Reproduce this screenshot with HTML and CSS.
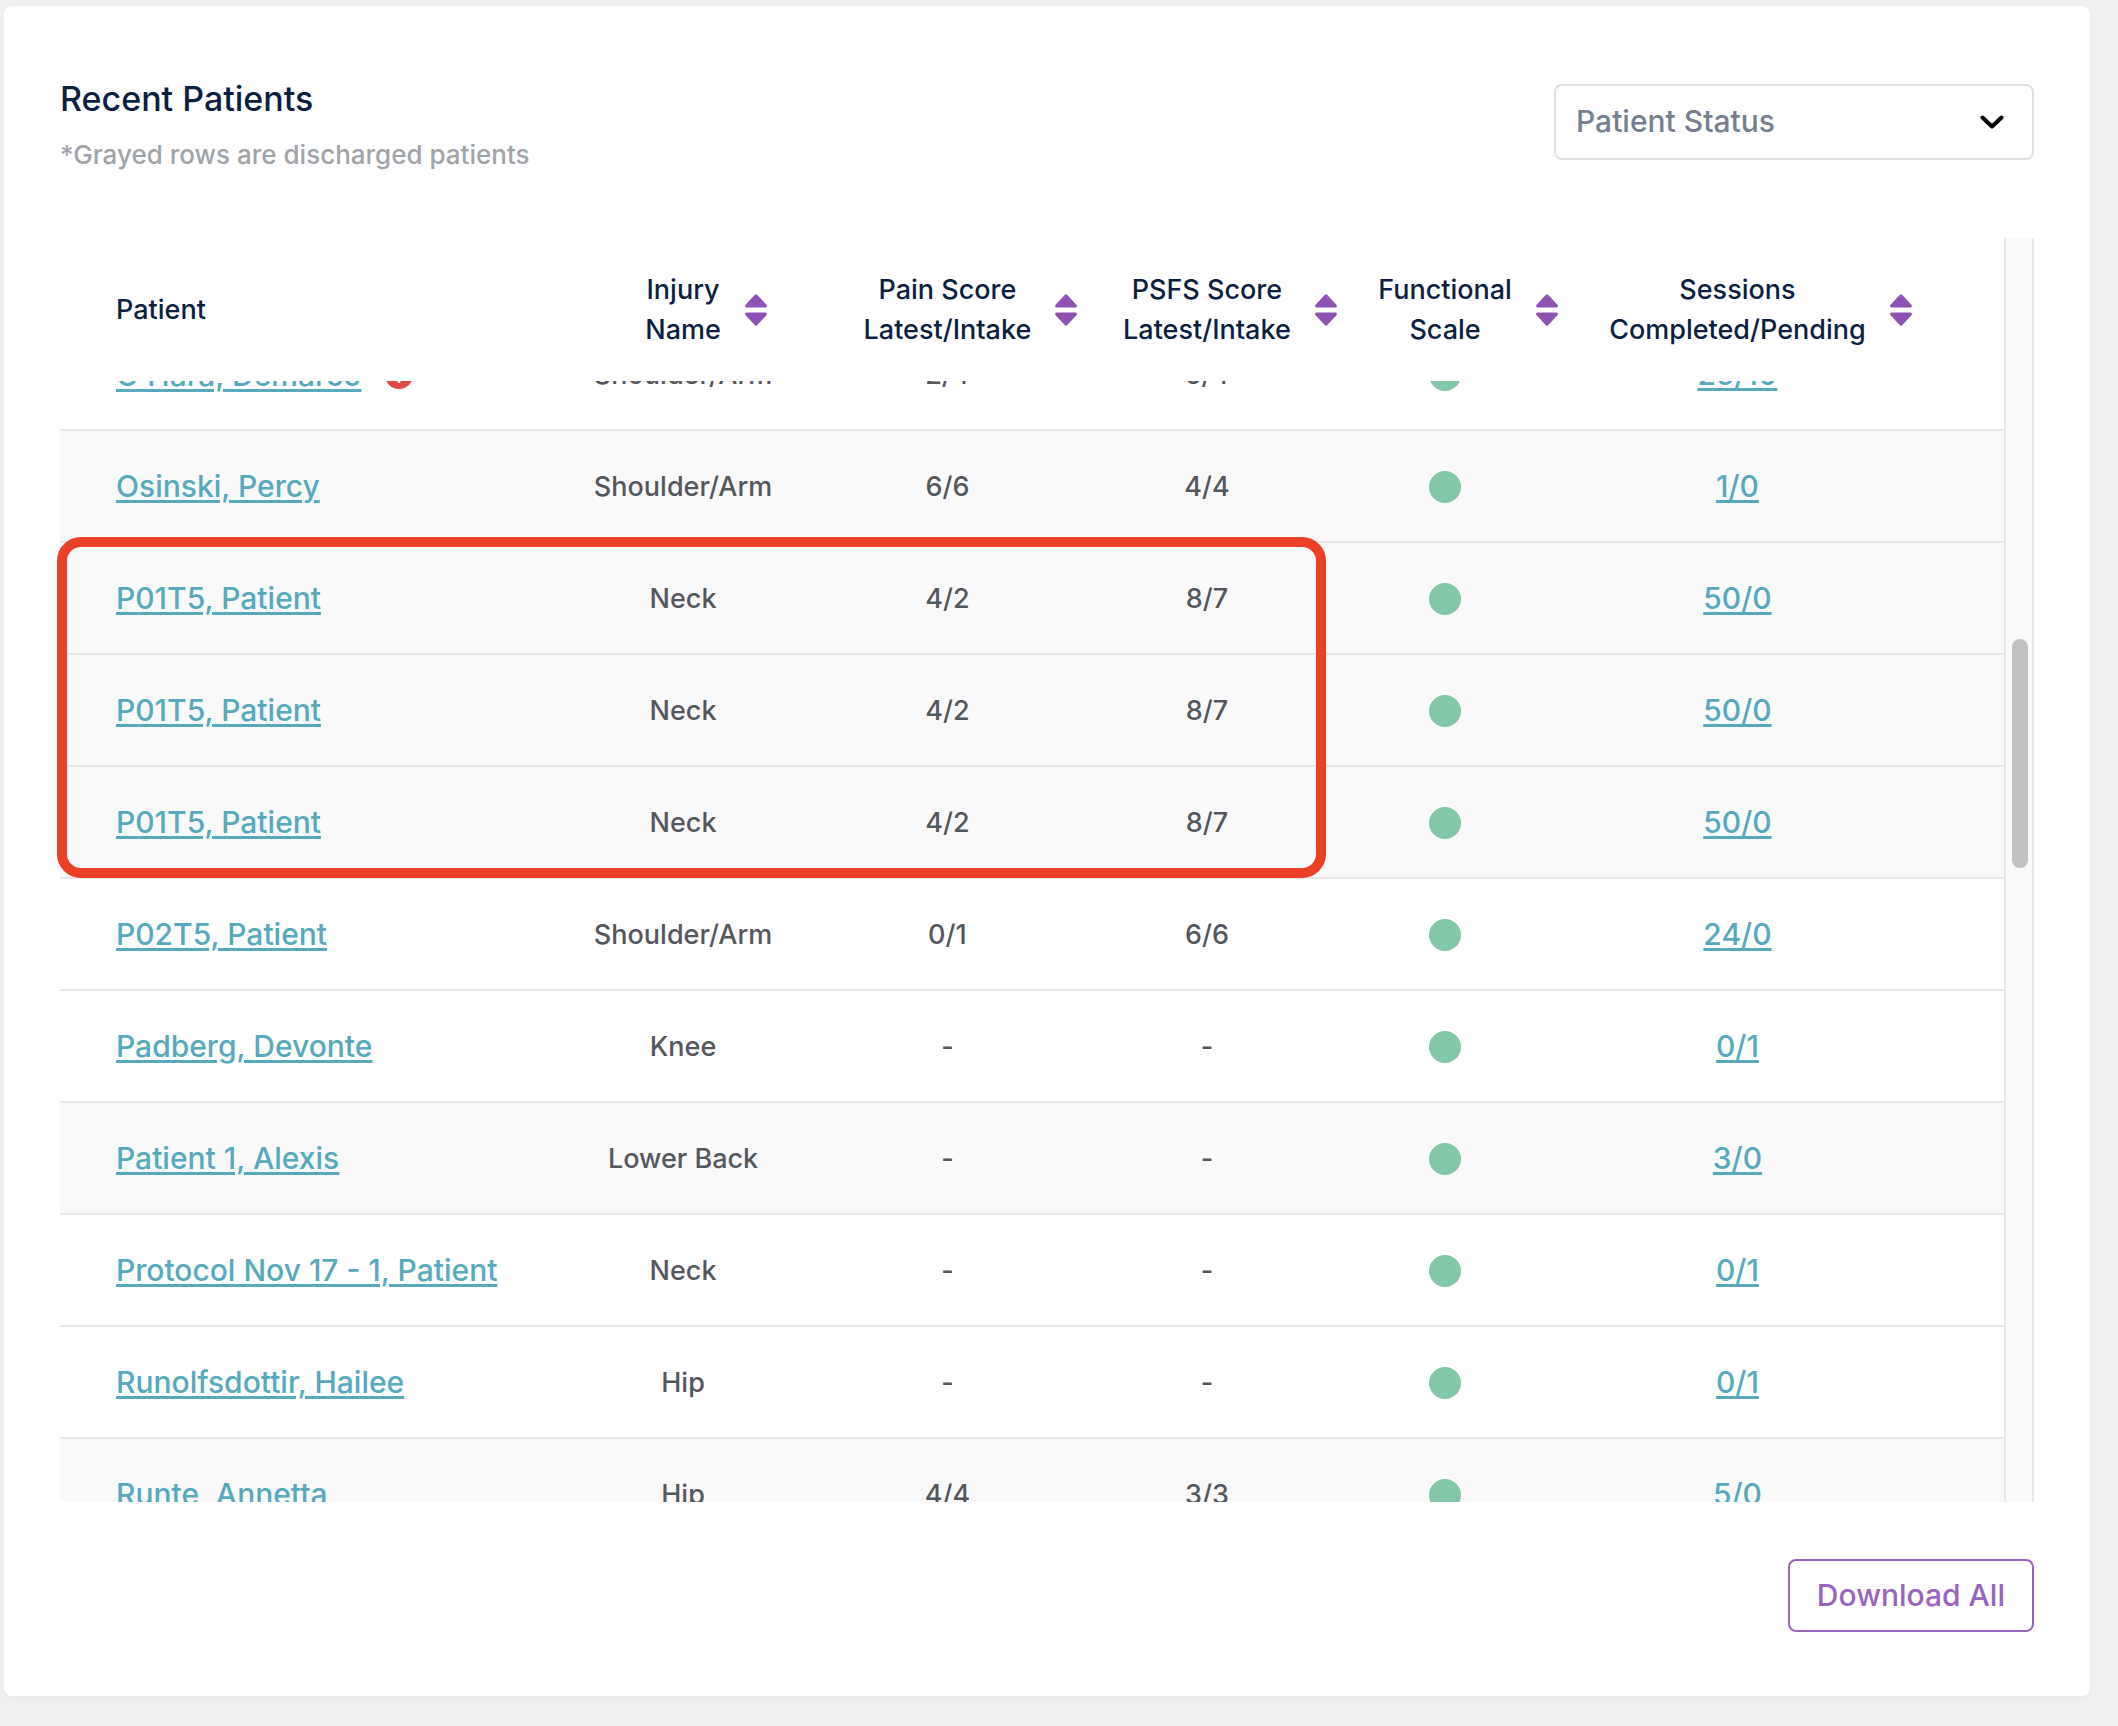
FILE: index.html
```html
<!DOCTYPE html>
<html lang="en">
<head>
<meta charset="utf-8">
<meta name="viewport" content="width=device-width, initial-scale=1">
<title>Recent Patients</title>
<link rel="stylesheet" href="styles.css">
</head>
<body>
<svg class="sprite" aria-hidden="true">
  <symbol id="sort" viewBox="0 0 22 32">
    <path d="M9.9.8 .6 10.7C-.5 12 .2 13.5 1.8 13.5H20.2C21.8 13.5 22.5 12 21.4 10.7L12.1.8Q11 -.2 9.9.8Z"/>
    <path d="M9.9 31.2 .6 21.3C-.5 20 .2 18.5 1.8 18.5H20.2C21.8 18.5 22.5 20 21.4 21.3L12.1 31.2Q11 32.2 9.9 31.2Z"/>
  </symbol>
</svg>
<main class="card">
  <header class="card-head">
    <div>
      <h1 class="title">Recent Patients</h1>
      <p class="note">*Grayed rows are discharged patients</p>
    </div>
    <div class="status">
      <select class="status-select" aria-label="Patient Status">
        <option>Patient Status</option>
        <option>Active</option>
        <option>Discharged</option>
      </select>
      <svg class="chevron" viewBox="0 0 24 14" aria-hidden="true"><path d="M2.5 2.5 12 11.5 21.5 2.5"/></svg>
    </div>
  </header>

  <section class="panel">
    <div class="scroller" id="scroller">
      <table class="patients">
        <colgroup>
          <col class="col-patient"><col class="col-injury"><col class="col-pain"><col class="col-psfs"><col class="col-scale"><col>
        </colgroup>
        <thead>
          <tr>
            <th scope="col" class="name">Patient</th>
            <th scope="col"><button type="button" class="sorter"><span>Injury<br>Name</span><svg class="sort-icon" aria-hidden="true"><use href="#sort"/></svg></button></th>
            <th scope="col"><button type="button" class="sorter"><span>Pain Score<br>Latest/Intake</span><svg class="sort-icon" aria-hidden="true"><use href="#sort"/></svg></button></th>
            <th scope="col"><button type="button" class="sorter"><span>PSFS Score<br>Latest/Intake</span><svg class="sort-icon" aria-hidden="true"><use href="#sort"/></svg></button></th>
            <th scope="col"><button type="button" class="sorter"><span>Functional<br>Scale</span><svg class="sort-icon" aria-hidden="true"><use href="#sort"/></svg></button></th>
            <th scope="col" class="sessions"><button type="button" class="sorter"><span>Sessions<br>Completed/Pending</span><svg class="sort-icon" aria-hidden="true"><use href="#sort"/></svg></button></th>
          </tr>
        </thead>
        <tbody>
          <tr><td class="name"><div class="flagged"><a href="#">O’Hara, Demarco</a><svg class="alert" viewBox="0 0 28 28" role="img" aria-label="Alert"><circle cx="14" cy="14" r="14"/><path d="M14 6.5V15"/><path d="M14 20.5V20.6"/></svg></div></td><td>Shoulder/Arm</td><td>2/4</td><td>6/4</td><td><span class="dot"></span></td><td class="sessions"><a href="#">25/10</a></td></tr>
          <tr class="discharged"><td class="name"><a href="#">Osinski, Percy</a></td><td>Shoulder/Arm</td><td>6/6</td><td>4/4</td><td><span class="dot"></span></td><td class="sessions"><a href="#">1/0</a></td></tr>
          <tr class="discharged"><td class="name"><a href="#">P01T5, Patient</a></td><td>Neck</td><td>4/2</td><td>8/7</td><td><span class="dot"></span></td><td class="sessions"><a href="#">50/0</a></td></tr>
          <tr class="discharged"><td class="name"><a href="#">P01T5, Patient</a></td><td>Neck</td><td>4/2</td><td>8/7</td><td><span class="dot"></span></td><td class="sessions"><a href="#">50/0</a></td></tr>
          <tr class="discharged"><td class="name"><a href="#">P01T5, Patient</a></td><td>Neck</td><td>4/2</td><td>8/7</td><td><span class="dot"></span></td><td class="sessions"><a href="#">50/0</a></td></tr>
          <tr><td class="name"><a href="#">P02T5, Patient</a></td><td>Shoulder/Arm</td><td>0/1</td><td>6/6</td><td><span class="dot"></span></td><td class="sessions"><a href="#">24/0</a></td></tr>
          <tr><td class="name"><a href="#">Padberg, Devonte</a></td><td>Knee</td><td>-</td><td>-</td><td><span class="dot"></span></td><td class="sessions"><a href="#">0/1</a></td></tr>
          <tr class="discharged"><td class="name"><a href="#">Patient 1, Alexis</a></td><td>Lower Back</td><td>-</td><td>-</td><td><span class="dot"></span></td><td class="sessions"><a href="#">3/0</a></td></tr>
          <tr><td class="name"><a href="#">Protocol Nov 17 - 1, Patient</a></td><td>Neck</td><td>-</td><td>-</td><td><span class="dot"></span></td><td class="sessions"><a href="#">0/1</a></td></tr>
          <tr><td class="name"><a href="#">Runolfsdottir, Hailee</a></td><td>Hip</td><td>-</td><td>-</td><td><span class="dot"></span></td><td class="sessions"><a href="#">0/1</a></td></tr>
          <tr class="discharged"><td class="name"><a href="#">Runte, Annetta</a></td><td>Hip</td><td>4/4</td><td>3/3</td><td><span class="dot"></span></td><td class="sessions"><a href="#">5/0</a></td></tr>
        </tbody>
      </table>
    </div>
    <div class="track" aria-hidden="true"><div class="thumb"></div></div>
    <div class="highlight" aria-hidden="true"></div>
  </section>

  <footer class="card-foot">
    <button type="button" class="download">Download All</button>
  </footer>
</main>
<script src="table.js"></script>
</body>
</html>
```
FILE: styles.css
```css
* { box-sizing: border-box; }

body {
  margin: 0;
  padding: 6px 28px 30px 4px;
  background: #f1f1f1;
  color: #54585d;
  font-family: Inter, "Liberation Sans", sans-serif;
  font-size: 27px;
  font-weight: 450;
  line-height: 40px;
}

.sprite { display: none; }

.card {
  padding: 69px 56px 64px;
  background: #fff;
  border-radius: 8px;
  box-shadow: 0 4px 16px rgba(0, 0, 0, .04);
}

.card-head {
  display: flex;
  justify-content: space-between;
  align-items: flex-start;
  margin-bottom: 63px;
}

.title {
  margin: 0 0 12px;
  color: #0b1f42;
  font-size: 34px;
  font-weight: 450;
  line-height: 48px;
}

.note {
  margin: 0;
  color: #a0a4a9;
  font-size: 26px;
}

.status {
  display: grid;
  align-items: center;
  width: 480px;
  margin-top: 9px;
}

.status-select,
.chevron { grid-area: 1 / 1; }

.status-select {
  appearance: none;
  width: 100%;
  height: 76px;
  padding: 0 20px 2px;
  border: 2px solid #dee2e6;
  border-radius: 8px;
  background: #fff;
  color: #767f8e;
  font: inherit;
  font-size: 30px;
}

.chevron {
  justify-self: end;
  width: 24px;
  height: 14px;
  margin-right: 30px;
  fill: none;
  stroke: #000;
  stroke-width: 4;
  stroke-linecap: round;
  stroke-linejoin: round;
  pointer-events: none;
}

.panel {
  position: relative;
  display: flex;
}

.scroller {
  flex: 1;
  max-height: 1264px;
  overflow-y: scroll;
  scrollbar-width: none;
}

.patients {
  width: 100%;
  table-layout: fixed;
  border-collapse: separate;
  border-spacing: 0;
}

.col-patient { width: 25.2%; }
.col-injury { width: 13.7%; }
.col-pain { width: 13.5%; }
.col-psfs { width: 13.2%; }
.col-scale { width: 11.3%; }

thead {
  position: sticky;
  top: 0;
  z-index: 1;
  background: #fff;
}

th {
  height: 143px;
  padding: 0;
  color: #0b1f42;
  font-weight: 450;
}

td {
  height: 112px;
  padding: 2px 0 0;
  border-bottom: 2px solid #e8e8e8;
  text-align: center;
}

.name {
  padding-left: 56px;
  text-align: left;
}

.sessions { padding-right: 84px; }

.sorter {
  display: grid;
  grid-template-columns: minmax(0, 1fr) auto minmax(0, 1fr);
  align-items: center;
  column-gap: 24px;
  width: 100%;
  padding: 0;
  border: 0;
  background: none;
  color: inherit;
  font: inherit;
  white-space: nowrap;
  cursor: pointer;
}

.sorter span { grid-column: 2; }

.sort-icon {
  width: 22px;
  height: 32px;
  fill: #8e52b5;
}

td a {
  color: #57a9bd;
  font-size: 30px;
  text-decoration-thickness: 3px;
  text-underline-offset: 3px;
}

.discharged td { background: #f9f9f9; }

.flagged {
  display: flex;
  align-items: center;
  gap: 24px;
}

.alert {
  width: 28px;
  height: 28px;
  fill: #df4c45;
  stroke: #fff;
  stroke-width: 3;
  stroke-linecap: round;
}

.alert circle { stroke: none; }

.dot {
  display: block;
  width: 32px;
  height: 32px;
  margin: 0 auto;
  border-radius: 50%;
  background: #82c8a8;
}

.track {
  width: 30px;
  padding: 401px 4px 0 6px;
  border: solid #e8e8e8;
  border-width: 0 2px;
  background: #fafafa;
}

.thumb {
  width: 16px;
  height: 229px;
  border-radius: 8px;
  background: #c1c1c1;
}

.highlight {
  position: absolute;
  z-index: 2;
  top: 299px;
  left: -3px;
  width: 1269px;
  height: 341px;
  border: 10px solid #eb4026;
  border-radius: 24px;
  pointer-events: none;
}

.card-foot {
  display: flex;
  justify-content: flex-end;
  margin-top: 57px;
}

.download {
  height: 73px;
  padding: 0 27px 2px;
  border: 2px solid #9a63c0;
  border-radius: 8px;
  background: #fff;
  color: #9a63c0;
  font: inherit;
  font-size: 30px;
  cursor: pointer;
}
```
FILE: table.js
```js
// Open the list part-way down the first patient row.
document.getElementById("scroller").scrollTop = 62;
```
